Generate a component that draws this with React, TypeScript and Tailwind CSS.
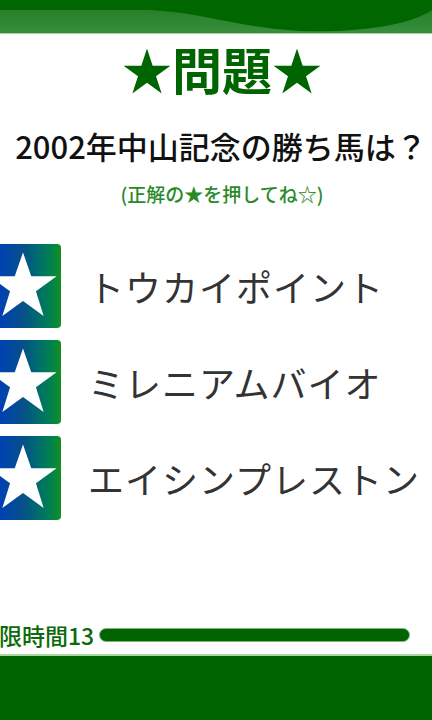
import React from 'react';

const choices = ['トウカイポイント', 'ミレニアムバイオ', 'エイシンプレストン'];

const FONT = '"Noto Sans CJK JP", "Noto Sans", sans-serif';

function StarTile() {
  return (
    <div className="relative -ml-[15px] h-[84px] w-[76px] shrink-0 rounded-[4px] bg-gradient-to-r from-[#0a2fd0] via-[#0a4f8a] to-[#15901a]">
      <svg viewBox="0 0 100 100" className="absolute left-[3px] top-[7px] h-[70px] w-[70px]">
        <polygon
          fill="#ffffff"
          points="50,2 61.8,36 98,36 68.5,57.5 79.5,93 50,71.5 20.5,93 31.5,57.5 2,36 38.2,36"
        />
      </svg>
    </div>
  );
}

export default function App() {
  return (
    <div className="flex h-[720px] w-[432px] flex-col overflow-hidden bg-white" style={{ fontFamily: FONT }}>
      {/* header wave */}
      <div className="h-[34px] w-full shrink-0 border-b border-[#a8d8a0] bg-[#006600]">
        <svg viewBox="0 0 432 33" preserveAspectRatio="none" className="h-[33px] w-full">
          <defs>
            <linearGradient id="lite" x1="0" y1="0" x2="0" y2="1">
              <stop offset="0" stopColor="#1f7a1f" />
              <stop offset="1" stopColor="#388e3c" />
            </linearGradient>
          </defs>
          <rect x="0" y="0" width="432" height="33" fill="url(#lite)" />
          <path
            d="M0,0 L0,10 L150,10 C200,12 240,28 300,31 C360,33 410,25 432,10 L432,0 Z"
            fill="#006600"
          />
        </svg>
      </div>

      {/* title */}
      <div className="mt-[4px] pl-[12px] text-center text-[50px] font-bold leading-[60px] text-[#006400]">
        ★問題★
      </div>

      {/* question */}
      <div className="mt-[30px] pl-[10px] text-center text-[31px] font-medium leading-[36px] text-[#111]">
        2002年中山記念の勝ち馬は？
      </div>
      <div className="mt-[17px] pl-[12px] text-center text-[19px] font-medium leading-[26px] text-[#2a8a2a]">
        (正解の★を押してね☆)
      </div>

      {/* choices */}
      <div className="mt-[37px] flex flex-col gap-[12px]">
        {choices.map((c) => (
          <div key={c} className="flex items-center">
            <StarTile />
            <span className="ml-[27px] whitespace-nowrap text-[36px] leading-[44px] tracking-[1px] text-[#333]">
              {c}
            </span>
          </div>
        ))}
      </div>

      <div className="flex-1" />

      {/* timer */}
      <div className="mb-[5px] flex items-center">
        <span className="-ml-[24px] whitespace-nowrap text-[23px] font-medium leading-[28px] text-[#0b6b0b]">
          制限時間13
        </span>
        <div className="ml-[5px] h-[14px] w-[311px] rounded-full border border-[#7fb87f] bg-[#006400]" />
      </div>

      {/* footer */}
      <div className="h-[66px] w-full shrink-0 border-t-2 border-[#a8d8a0] bg-[#006400]" />
    </div>
  );
}
